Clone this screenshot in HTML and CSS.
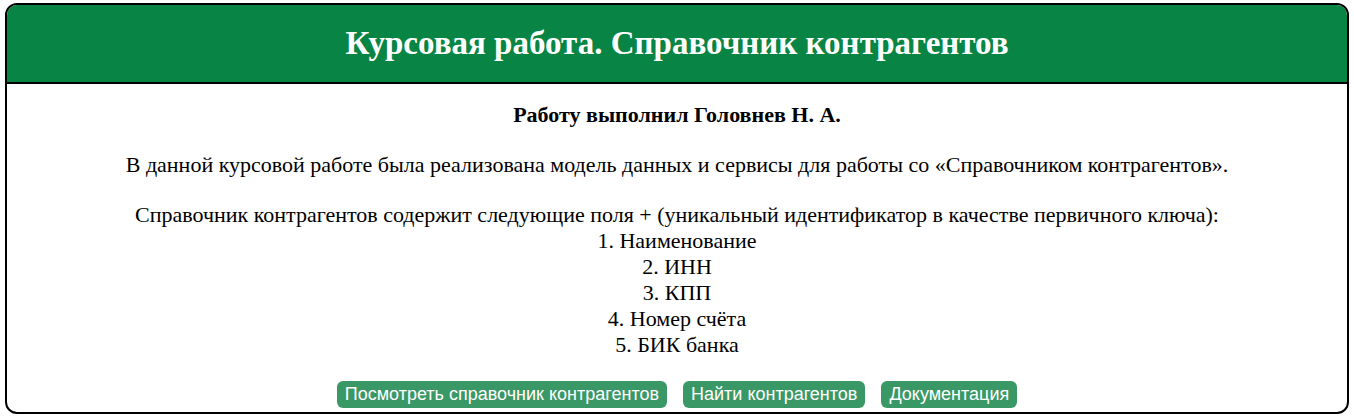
FILE: index.html
```html
<!DOCTYPE html>
<html lang="ru">
<head>
<meta charset="utf-8">
<title>Курсовая работа. Справочник контрагентов</title>
<link rel="stylesheet" href="styles.css">
</head>
<body>
<div class="card">
  <header class="card-header">
    <h1>Курсовая работа. Справочник контрагентов</h1>
  </header>
  <main class="card-body">
    <p class="author">Работу выполнил Головнев Н. А.</p>
    <p class="desc">В данной курсовой работе была реализована модель данных и сервисы для работы со «Справочником контрагентов».</p>
    <p class="fields">Справочник контрагентов содержит следующие поля + (уникальный идентификатор в качестве первичного ключа):<br>
    1. Наименование<br>
    2. ИНН<br>
    3. КПП<br>
    4. Номер счёта<br>
    5. БИК банка</p>
    <nav class="actions">
      <a class="btn" href="#">Посмотреть справочник контрагентов</a>
      <a class="btn" href="#">Найти контрагентов</a>
      <a class="btn" href="#">Документация</a>
    </nav>
  </main>
</div>
</body>
</html>
```
FILE: styles.css
```css
html, body {
  margin: 0;
  padding: 0;
  background: #fff;
}
body {
  padding: 3px 5px 0 5px;
  font-family: "Liberation Serif", "Times New Roman", serif;
  color: #000;
}
.card {
  border: 2px solid #000;
  border-radius: 12px;
  overflow: hidden;
  height: 411px;
  box-sizing: border-box;
  display: flex;
  flex-direction: column;
}
.card-header {
  background: #088544;
  border-bottom: 2px solid #000;
  height: 77px;
  display: flex;
  align-items: center;
  justify-content: center;
}
.card-header h1 {
  margin: 0;
  color: #fff;
  font-size: 33px;
  font-weight: bold;
}
.card-body {
  text-align: center;
  font-size: 22px;
  line-height: 26px;
  padding-top: 18px;
}
.card-body p {
  margin: 0 0 24px 0;
}
.card-body p.fields {
  margin-bottom: 23px;
}
.author {
  font-weight: bold;
}
.actions {
  display: flex;
  justify-content: center;
  gap: 16px;
}
.btn {
  font-family: "Liberation Sans", Arial, sans-serif;
  font-size: 18px;
  line-height: 27px;
  color: #fff;
  text-decoration: none;
  background: #3a9866;
  border-radius: 6px;
  padding: 0 8px;
}
```
